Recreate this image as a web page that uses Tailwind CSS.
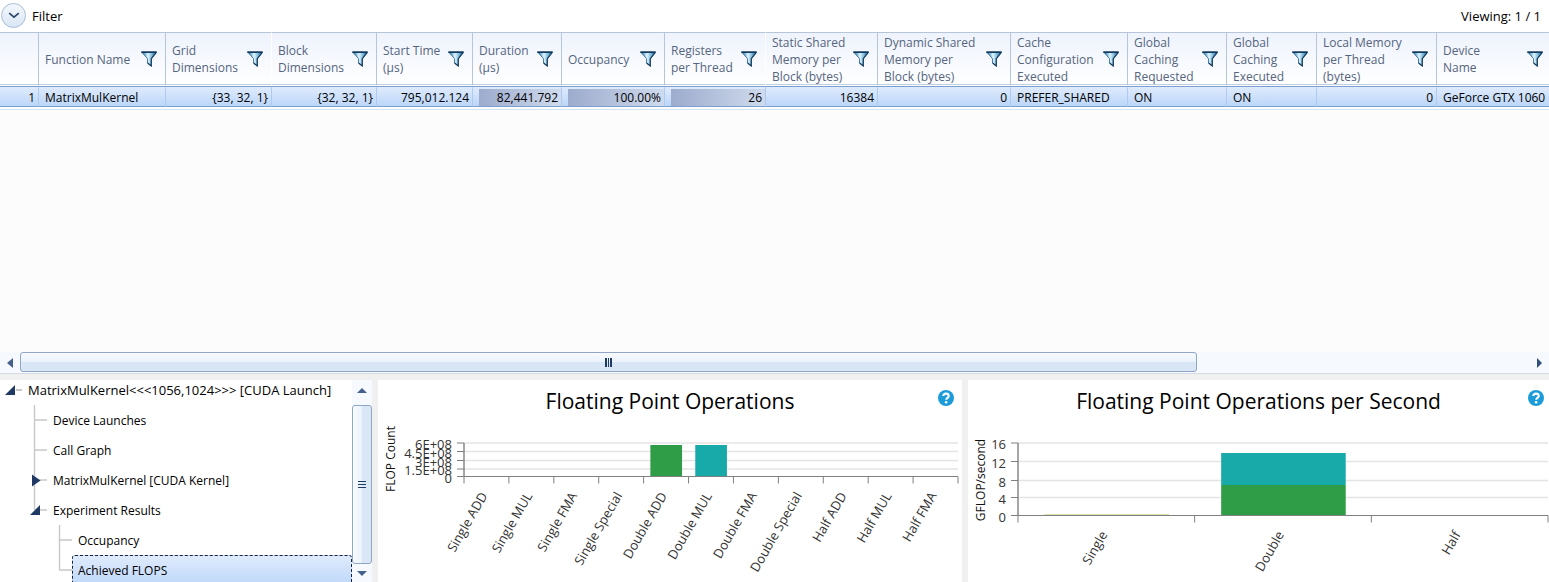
<!DOCTYPE html>
<html lang="en">
<head>
<meta charset="utf-8">
<meta name="viewport" content="width=device-width, initial-scale=1">
<title>CUDA Launch Details</title>
<script src="https://cdn.jsdelivr.net/npm/@tailwindcss/browser@4"></script>
</head>
<body class="flex h-screen flex-col overflow-hidden bg-white font-['Open_Sans','Noto_Sans',sans-serif] text-[12px] leading-[17px] text-black">

<svg class="absolute size-0" aria-hidden="true">
  <defs>
    <linearGradient id="funnelFill" x1="0" x2="1" y1="0" y2="0">
      <stop offset="0.1" stop-color="#3583b4"/><stop offset=".42" stop-color="#dff4fd"/><stop offset=".55" stop-color="#b4dff2"/><stop offset=".9" stop-color="#2f7eae"/>
    </linearGradient>
  </defs>
</svg>

<header class="flex h-8 shrink-0 items-center justify-between pl-px pr-2 text-[13px]">
  <button type="button" class="flex items-center gap-1.5 pb-px">
    <span class="flex size-[25px] items-center justify-center rounded-full border border-[#a9bdd6] bg-linear-to-b from-[#f4f8fd] to-[#d9e6f5]">
      <svg class="h-[7px] w-3" viewBox="0 0 12 7" fill="none" stroke="#2b4468" stroke-width="1.700"><path d="M1.200 1.200 6 5.200l4.800-4"/></svg>
    </span>
    <span class="pt-0.5">Filter</span>
  </button>
  <p>Viewing: 1 / 1</p>
</header>

<main class="min-h-0 flex-1 overflow-hidden bg-[#fcfcfc]">
  <div class="border-b border-[#d5e3f3] bg-white pb-0.5">
  <table class="w-full table-fixed border-separate border-spacing-0">
    <colgroup>
      <col class="w-[39px]"><col class="w-[127px]"><col class="w-[106px]"><col class="w-[105px]"><col class="w-[96px]"><col class="w-[89px]"><col class="w-[103px]"><col class="w-[101px]"><col class="w-[112px]"><col class="w-[133px]"><col class="w-[117px]"><col class="w-[99px]"><col class="w-[90px]"><col class="w-[120px]"><col>
    </colgroup>
    <thead><tr id="heads"></tr></thead>
    <tbody><tr id="cells"></tr></tbody>
  </table>
  </div>
</main>

<div class="flex h-[22px] shrink-0 items-center border-b border-[#d3dae3] bg-[#f6f9fe]">
  <button type="button" aria-label="Scroll left" class="flex h-full w-5 shrink-0 items-center justify-center"><svg class="h-2.5 w-1.5" viewBox="0 0 6 10"><path d="M6 0v10L0 5z" fill="#44618c"/></svg></button>
  <div class="flex h-full flex-1">
    <div class="flex h-5 w-[78%] items-center justify-center gap-px rounded-[3px] border border-[#8fa6c6] bg-linear-to-b from-[#f8fbfe] from-0% via-[#eaf2fb] via-50% to-[#d9e6f5] to-50%">
      <span class="h-[9px] w-0.5 bg-[#1f3a63]"></span><span class="h-[9px] w-px bg-[#1f3a63]"></span><span class="h-[9px] w-0.5 bg-[#1f3a63]"></span>
    </div>
  </div>
  <button type="button" aria-label="Scroll right" class="flex h-full w-5 shrink-0 items-center justify-center"><svg class="h-2.5 w-[5px]" viewBox="0 0 5 10"><path d="M0 0v10l5-5z" fill="#2f4f7d"/></svg></button>
</div>

<section class="flex h-[208px] shrink-0 gap-1.5 bg-[#f0f0f0] pt-1.5">
  <nav class="flex w-[372px] shrink-0 overflow-hidden bg-white" aria-label="Experiment tree">
    <ul class="min-w-0 flex-1 overflow-hidden">
      <li class="mb-[5px] flex h-5 pl-[5px]">
        <svg class="h-5 w-[17px] shrink-0" viewBox="0 0 17 20"><path d="M11 10h6" stroke="#c8c8c8" stroke-width="2"/><path d="M10 5v10H0z" fill="#1f3a63"/></svg>
        <button type="button" class="px-1.5 text-[13px] whitespace-nowrap">MatrixMulKernel&lt;&lt;&lt;1056,1024&gt;&gt;&gt; [CUDA Launch]</button>
      </li>
      <li class="flex h-[30px] pl-[30px]">
        <svg class="h-[30px] w-[17px] shrink-0" viewBox="0 0 17 30"><path d="M4.500 0v30M5 15h12" stroke="#c8c8c8" stroke-width="1.400"/></svg>
        <button type="button" class="px-1.5">Device Launches</button>
      </li>
      <li class="flex h-[30px] pl-[30px]">
        <svg class="h-[30px] w-[17px] shrink-0" viewBox="0 0 17 30"><path d="M4.500 0v30M5 15h12" stroke="#c8c8c8" stroke-width="1.400"/></svg>
        <button type="button" class="px-1.5">Call Graph</button>
      </li>
      <li class="flex h-[30px] pl-[30px]">
        <svg class="h-[30px] w-[17px] shrink-0" viewBox="0 0 17 30"><path d="M4.500 0v30M5 15h12" stroke="#c8c8c8" stroke-width="1.400"/><path d="M2 9.500v12l8.500-6z" fill="#1f3a63"/></svg>
        <button type="button" class="px-1.5">MatrixMulKernel [CUDA Kernel]</button>
      </li>
      <li class="flex h-[30px] pl-[30px]">
        <svg class="h-[30px] w-[17px] shrink-0" viewBox="0 0 17 30"><path d="M4.500 0v15M5 15h12" stroke="#c8c8c8" stroke-width="1.400"/><path d="M10 10v10H0z" fill="#1f3a63"/></svg>
        <button type="button" class="px-1.5">Experiment Results</button>
      </li>
      <li class="flex h-[30px] pl-[55px]">
        <svg class="h-[30px] w-[17px] shrink-0" viewBox="0 0 17 30"><path d="M4.500 0v30M5 15h12" stroke="#c8c8c8" stroke-width="1.400"/></svg>
        <button type="button" class="px-1.5">Occupancy</button>
      </li>
      <li class="flex h-[30px] pl-[55px]">
        <svg class="h-[30px] w-[17px] shrink-0" viewBox="0 0 17 30"><path d="M4.500 0v15.500M5 15h12" stroke="#c8c8c8" stroke-width="1.400"/></svg>
        <button type="button" class="flex-1 rounded-[3px] border border-dashed border-[#16253c] bg-linear-to-b from-[#dfebfc] to-[#c0d8f9] px-[5px] text-left">Achieved FLOPS</button>
      </li>
    </ul>
    <div class="flex w-5 shrink-0 flex-col bg-[#f6f9fe]">
      <button type="button" aria-label="Scroll up" class="flex h-[25px] items-center justify-center pb-1"><svg class="h-[5px] w-2.5" viewBox="0 0 10 5"><path d="M0 5h10L5 0z" fill="#44618c"/></svg></button>
      <div class="flex flex-1 flex-col items-center justify-center gap-0.5 rounded-[3px] border border-[#8fa6c6] bg-linear-to-r from-[#f8fbfe] from-0% via-[#eaf2fb] via-50% to-[#d9e6f5] to-50%">
        <span class="h-px w-2 bg-[#1f3a63]"></span><span class="h-px w-2 bg-[#1f3a63]"></span><span class="h-px w-2 bg-[#1f3a63]"></span>
      </div>
      <button type="button" aria-label="Scroll down" class="flex h-[18px] items-center justify-center"><svg class="h-[5px] w-2.5" viewBox="0 0 10 5"><path d="M0 0h10L5 5z" fill="#44618c"/></svg></button>
    </div>
  </nav>

  <article class="relative min-w-0 flex-[584] overflow-hidden bg-white">
    <h2 class="pt-[7px] text-center text-[21px] leading-7">Floating Point Operations</h2>
    <button type="button" aria-label="Help" class="absolute top-2.5 right-2"><svg class="size-4" viewBox="0 0 16 16"><circle cx="8" cy="8" r="8" fill="#1b9cd9"/><path d="M5.300 6.100C5.300 4.500 6.400 3.600 8 3.600s2.700.9 2.700 2.300c0 1.900-2.500 1.900-2.500 3.900" fill="none" stroke="#fff" stroke-width="2.200"/><circle cx="8.100" cy="12.300" r="1.300" fill="#fff"/></svg></button>
    <svg id="count" class="block h-[167px] w-full" role="img" aria-label="FLOP Count per operation"></svg>
  </article>

  <article class="relative min-w-0 flex-[581] overflow-hidden bg-white">
    <h2 class="pt-[7px] text-center text-[21px] leading-7">Floating Point Operations per Second</h2>
    <button type="button" aria-label="Help" class="absolute top-2.5 right-[5px]"><svg class="size-4" viewBox="0 0 16 16"><circle cx="8" cy="8" r="8" fill="#1b9cd9"/><path d="M5.300 6.100C5.300 4.500 6.400 3.600 8 3.600s2.700.9 2.700 2.300c0 1.900-2.500 1.900-2.500 3.900" fill="none" stroke="#fff" stroke-width="2.200"/><circle cx="8.100" cy="12.300" r="1.300" fill="#fff"/></svg></button>
    <svg id="rate" class="block h-[167px] w-full" role="img" aria-label="GFLOP per second by precision"></svg>
  </article>
</section>

<script>
  // [heading lines, value, numeric, soft divider, bar]
  const columns = [
    ['', '1', 1],
    ['Function Name', 'MatrixMulKernel'],
    ['Grid<br>Dimensions', '{33, 32, 1}', 1, 1],
    ['Block<br>Dimensions', '{32, 32, 1}', 1],
    ['Start Time<br>(µs)', '795,012.124', 1],
    ['Duration<br>(µs)', '82,441.792', 1, 0, 1],
    ['Occupancy', '100.00%', 1, 0, 1],
    ['Registers<br>per Thread', '26', 1, 1, 1],
    ['Static Shared<br>Memory per<br>Block (bytes)', '16384', 1],
    ['Dynamic Shared<br>Memory per<br>Block (bytes)', '0', 1],
    ['Cache<br>Configuration<br>Executed', 'PREFER_SHARED'],
    ['Global<br>Caching<br>Requested', 'ON'],
    ['Global<br>Caching<br>Executed', 'ON'],
    ['Local Memory<br>per Thread<br>(bytes)', '0', 1],
    ['Device<br>Name', 'GeForce GTX 1060'],
  ];
  const funnel = '<svg class="size-4" viewBox="0 0 16 16"><path d="M.6 1h14.800L10.200 7.700v7.300L6.500 12V7.700z" fill="url(#funnelFill)" stroke="#3a7299" stroke-width=".9"/><path d="M.3 1.200h15.400" stroke="#15395c" stroke-width="1.600"/><path d="M15 1.800 10.300 7.700v7.300L6.600 12" fill="none" stroke="#15395c" stroke-width="1.100"/></svg>';
  const last = columns.length - 1;
  document.getElementById('heads').innerHTML = columns.map(([h, , , soft], i) =>
    `<th scope="col" class="h-[54px] border-y border-t-[#b6c5da] border-b-white ${i === last ? '' : 'border-r'} ${soft ? 'border-r-white' : 'border-r-[#b6c5da]'} bg-linear-to-b from-[#eef3fc] to-white p-0 text-left font-normal text-[#55657f] shadow-[inset_0_-1px_0_#c3cfdf]">` +
    (h ? `<div class="flex items-center justify-between ${i === last ? 'pr-1.5' : 'pr-2'} pl-1.5 whitespace-nowrap"><span>${h}</span><button type="button" aria-label="Filter column">${funnel}</button></div>` : '') + '</th>').join('');
  document.getElementById('cells').innerHTML = columns.map(([, v, num, , bar], i) =>
    `<td class="h-[21px] overflow-hidden border-y ${i === last ? '' : 'border-r'} border-y-[#7a9fd0] border-r-[#aecbef] bg-linear-to-b from-[#dfebfc] to-[#bcd6f9] p-0 align-bottom whitespace-nowrap ${num ? 'text-right' : ''}">` +
    `<div class="ml-1.5 pr-[3px] ${bar ? 'bg-linear-to-r from-[#9dabcd] to-[#cfdbed]' : ''}">${v}</div></td>`).join('');

  // Horizontal positions are percentages of the plot, so the charts follow the window's width.
  function chart(id, o) {
    const n = o.labels.length, base = o.ys[o.ys.length - 1][0];
    let p = '';
    o.ys.forEach(([y], i) => { if (i < o.ys.length - 1) p += `<path d="M0 0h4000" transform="translate(0 ${y})" stroke="#e4e4e4" stroke-width="1.500"/>`; });
    o.bars.forEach(([k, y, h, c]) => { p += `<rect x="${(k + .15) * 100 / n}%" y="${y}" width="${70.500 / n}%" height="${h}" fill="${c}"/>`; });
    p += `<line x1="0" x2="100%" y1="${base}" y2="${base}" stroke="#808080" stroke-width="1"/>`;
    let ticks = '';
    for (let k = 0; k <= n; k++) ticks += `<line x1="${k * 100 / n}%" x2="${k * 100 / n}%" y1="${base}" y2="${base + 7}" stroke="#808080"/>`;
    let labels = '';
    o.labels.forEach((t, k) => { labels += `<svg x="${(k + .5) * 100 / n}%" overflow="visible"><text x="0" y="4" text-anchor="end" transform="translate(-2 ${base + 17}) rotate(-60)">${t}</text></svg>`; });
    let ax = `<line x1="${o.left}" x2="${o.left}" y1="${o.ys[0][0]}" y2="${base}" stroke="#808080" stroke-width="1.400"/>`;
    o.ys.forEach(([y, t]) => { ax += `<line x1="${o.left - 7}" x2="${o.left}" y1="${y}" y2="${y}" stroke="#808080"/><text x="${o.left - 12}" y="${Math.round(y) + 6}" text-anchor="end">${t}</text>`; });
    document.getElementById(id).innerHTML =
      `<g class="text-[13px] font-medium" fill="#333"><text class="text-[12px]" text-anchor="middle" transform="translate(17 ${o.titleY}) rotate(-90)" fill="#111">${o.title}</text>` +
      `<svg x="${o.left}" y="0" height="166" class="${o.width}">${p}</svg><svg x="${o.left}" y="0" height="166" overflow="visible" class="${o.width}">${ticks}${labels}</svg>${ax}</g>`;
  }
  chart('count', {
    left: 86, width: 'w-[calc(100%-90px)]', title: 'FLOP Count', titleY: 44,
    labels: ['Single ADD', 'Single MUL', 'Single FMA', 'Single Special', 'Double ADD', 'Double MUL', 'Double FMA', 'Double Special', 'Half ADD', 'Half MUL', 'Half FMA'],
    ys: [[28, '6E+08'], [36.5, '4.5E+08'], [45.5, '3E+08'], [54, '1.5E+08'], [61.5, '0']],
    bars: [[3, 61, 1, '#cdd08a'], [4, 30, 31, '#2f9c47'], [5, 30, 31, '#17aaa9']],
  });
  chart('rate', {
    left: 50, width: 'w-[calc(100%-51px)]', title: 'GFLOP/second', titleY: 65,
    labels: ['Single', 'Double', 'Half'],
    ys: [[28, '16'], [46.5, '12'], [65.5, '8'], [82.500, '4'], [100.5, '0']],
    bars: [[0, 99, 1, '#dcdfa8'], [1, 38, 32, '#17aaa9'], [1, 70, 30, '#2f9c47']],
  });
</script>
</body>
</html>
